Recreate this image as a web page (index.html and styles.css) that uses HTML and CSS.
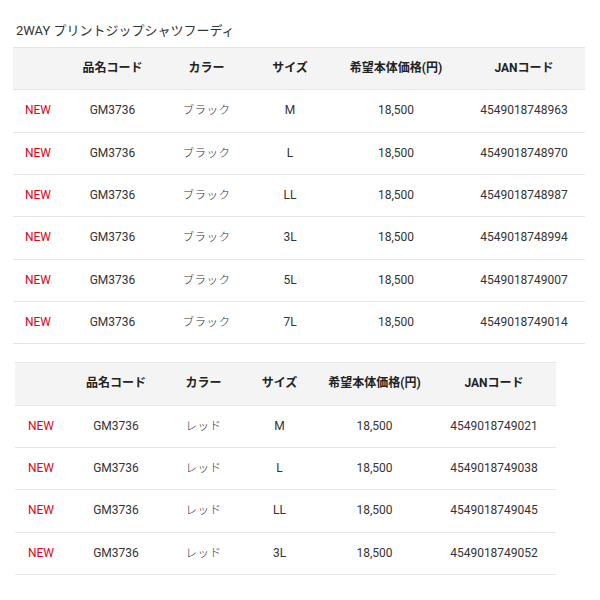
FILE: index.html
```html
<!DOCTYPE html>
<html lang="ja">
<head>
<meta charset="utf-8">
<title>2WAY プリントジップシャツフーディ</title>
<link rel="stylesheet" href="styles.css">
</head>
<body>
<div class="page">
  <h2 class="title">2WAY プリントジップシャツフーディ</h2>
  <table class="spec spec-a">
    <thead>
      <tr><th></th><th>品名コード</th><th>カラー</th><th>サイズ</th><th>希望本体価格(円)</th><th>JANコード</th></tr>
    </thead>
    <tbody>
      <tr><td class="new">NEW</td><td>GM3736</td><td class="color">ブラック</td><td>M</td><td>18,500</td><td>4549018748963</td></tr>
      <tr><td class="new">NEW</td><td>GM3736</td><td class="color">ブラック</td><td>L</td><td>18,500</td><td>4549018748970</td></tr>
      <tr><td class="new">NEW</td><td>GM3736</td><td class="color">ブラック</td><td>LL</td><td>18,500</td><td>4549018748987</td></tr>
      <tr><td class="new">NEW</td><td>GM3736</td><td class="color">ブラック</td><td>3L</td><td>18,500</td><td>4549018748994</td></tr>
      <tr><td class="new">NEW</td><td>GM3736</td><td class="color">ブラック</td><td>5L</td><td>18,500</td><td>4549018749007</td></tr>
      <tr><td class="new">NEW</td><td>GM3736</td><td class="color">ブラック</td><td>7L</td><td>18,500</td><td>4549018749014</td></tr>
    </tbody>
  </table>
  <table class="spec spec-b">
    <thead>
      <tr><th></th><th>品名コード</th><th>カラー</th><th>サイズ</th><th>希望本体価格(円)</th><th>JANコード</th></tr>
    </thead>
    <tbody>
      <tr><td class="new">NEW</td><td>GM3736</td><td class="color">レッド</td><td>M</td><td>18,500</td><td>4549018749021</td></tr>
      <tr><td class="new">NEW</td><td>GM3736</td><td class="color">レッド</td><td>L</td><td>18,500</td><td>4549018749038</td></tr>
      <tr><td class="new">NEW</td><td>GM3736</td><td class="color">レッド</td><td>LL</td><td>18,500</td><td>4549018749045</td></tr>
      <tr><td class="new">NEW</td><td>GM3736</td><td class="color">レッド</td><td>3L</td><td>18,500</td><td>4549018749052</td></tr>
    </tbody>
  </table>
</div>
</body>
</html>
```
FILE: styles.css
```css
html, body {
  margin: 0;
  padding: 0;
  background: #fff;
}
body {
  font-family: Roboto, "Noto Sans CJK JP", sans-serif;
  color: #333;
}
.page {
  padding: 20px 15px 0 13px;
}
.title {
  margin: 0 0 6px 3px;
  font-size: 13px;
  line-height: 21px;
  font-weight: normal;
  color: #333;
}
.spec {
  border-collapse: collapse;
  table-layout: fixed;
  font-size: 12px;
}
.spec th,
.spec td {
  padding: 12px 0 12px;
  line-height: 17.33px;
  text-align: center;
  border-bottom: 1px solid #e6e6e6;
  white-space: nowrap;
}
.spec th {
  background: #f4f4f4;
  border-top: 1px solid #e6e6e6;
  font-weight: bold;
  color: #222;
}
.spec td.new {
  color: #e50012;
}
.spec td.color {
  color: #333;
  font-size: 11.5px;
  font-weight: 300;
  letter-spacing: 0.5px;
}
.spec-a {
  width: 572px;
}
.spec-a th:nth-child(1) { width: 50px; }
.spec-a th:nth-child(2) { width: 99px; }
.spec-a th:nth-child(3) { width: 89px; }
.spec-a th:nth-child(4) { width: 78px; }
.spec-a th:nth-child(5) { width: 134px; }
.spec-a th:nth-child(6) { width: 122px; }
.spec-b {
  width: 541px;
  margin: 18px 0 0 2px;
}
.spec-b th:nth-child(1) { width: 52px; }
.spec-b th:nth-child(2) { width: 98px; }
.spec-b th:nth-child(3) { width: 77px; }
.spec-b th:nth-child(4) { width: 75px; }
.spec-b th:nth-child(5) { width: 115px; }
.spec-b th:nth-child(6) { width: 124px; }
```
